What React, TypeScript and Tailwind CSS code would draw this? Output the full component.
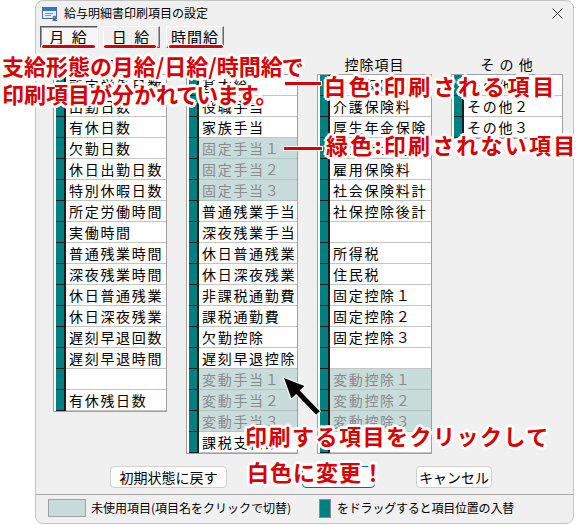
import React from "react";

type Item = { t: string; u?: boolean };

const col1: Item[] = [
  { t: "所定労働日数" }, { t: "出勤日数" }, { t: "有休日数" }, { t: "欠勤日数" },
  { t: "休日出勤日数" }, { t: "特別休暇日数" }, { t: "所定労働時間" }, { t: "実働時間" },
  { t: "普通残業時間" }, { t: "深夜残業時間" }, { t: "休日普通残業" }, { t: "休日深夜残業" },
  { t: "遅刻早退回数" }, { t: "遅刻早退時間" }, { t: "" }, { t: "有休残日数" },
];
const col2: Item[] = [
  { t: "基本給" }, { t: "役職手当" }, { t: "家族手当" },
  { t: "固定手当１", u: true }, { t: "固定手当２", u: true }, { t: "固定手当３", u: true },
  { t: "普通残業手当" }, { t: "深夜残業手当" }, { t: "休日普通残業" }, { t: "休日深夜残業" },
  { t: "非課税通勤費" }, { t: "課税通勤費" }, { t: "欠勤控除" }, { t: "遅刻早退控除" },
  { t: "変動手当１", u: true }, { t: "変動手当２", u: true }, { t: "変動手当３", u: true },
  { t: "課税支給額" },
];
const col3: Item[] = [
  { t: "健康保険料" }, { t: "介護保険料" }, { t: "厚生年金保険" }, { t: "厚生年金基金" },
  { t: "雇用保険料" }, { t: "社会保険料計" }, { t: "社保控除後計" }, { t: "" },
  { t: "所得税" }, { t: "住民税" }, { t: "固定控除１" }, { t: "固定控除２" }, { t: "固定控除３" },
  { t: "" },
  { t: "変動控除１", u: true }, { t: "変動控除２", u: true }, { t: "変動控除３", u: true },
  { t: "" },
];
const col4: Item[] = [{ t: "その他１" }, { t: "その他２" }, { t: "その他３" }];

const OUT =
  "[text-shadow:0_0_3px_#fff,-2px_-2px_0_#fff,2px_-2px_0_#fff,-2px_2px_0_#fff,2px_2px_0_#fff,0_-3px_0_#fff,0_3px_0_#fff,-3px_0_0_#fff,3px_0_0_#fff]";

function Row({ item }: { item: Item }) {
  return (
    <div className="flex h-[21px]">
      <div className="w-[8px] bg-[#008080] border-b border-b-[#1c1c1c]" />
      <div className="w-[2px] bg-[#1c1c1c]" />
      <div
        className={
          item.u
            ? "flex-1 border-b border-b-[#b8c4c4] bg-[#c9dcdc] text-[#8a8a8a] pl-[3px] text-[14px] leading-[20px] tracking-[1.7px] whitespace-nowrap overflow-hidden"
            : "flex-1 border-b border-b-[#c4c4c4] bg-white text-black pl-[3px] text-[14px] leading-[20px] tracking-[1.7px] whitespace-nowrap overflow-hidden"
        }
      >
        {item.t}
      </div>
    </div>
  );
}

function Column({ title, items, cls }: { title: string; items: Item[]; cls: string }) {
  return (
    <div className={cls}>
      <div className="h-[17px] text-center text-[14px] leading-[17px] tracking-[1px] text-black whitespace-nowrap">
        {title}
      </div>
      <div className="mt-[1px] border border-[#a0a0a0] bg-white pl-[2px]">
        {items.map((it, i) => (
          <Row key={i} item={it} />
        ))}
      </div>
    </div>
  );
}

export default function App() {
  return (
    <div className="relative w-[581px] h-[525px] bg-white overflow-hidden font-['Noto_Sans_CJK_JP',sans-serif]">
      {/* Window */}
      <div className="ml-[35px] w-[539px] h-[524px] border border-[#c4c4c4] rounded-[8px] bg-[#f0f0f0] flex flex-col">
        {/* Title bar */}
        <div className="h-[24px] flex items-center pl-[6px]">
          <svg width="16" height="15" viewBox="0 0 16 15">
            <rect x="0.5" y="1.5" width="14" height="11" fill="#e4eef6" stroke="#4a6f96" />
            <rect x="1" y="2" width="13" height="3" fill="#2f78c4" />
            <rect x="3" y="7" width="8" height="1" fill="#7d93aa" />
            <rect x="3" y="9" width="6" height="1" fill="#7d93aa" />
            <text x="10.5" y="14.5" fontSize="8" fontWeight="bold" fill="#f2d200" stroke="#1c4fa0" strokeWidth="0.6" fontFamily="Liberation Sans, sans-serif">2</text>
          </svg>
          <span className="ml-[6px] text-[12px] leading-[14px] text-black">給与明細書印刷項目の設定</span>
          <svg className="ml-auto mr-[10px]" width="11" height="11" viewBox="0 0 11 11">
            <path d="M0.5 0.5 L10.5 10.5 M10.5 0.5 L0.5 10.5" stroke="#333" strokeWidth="1" />
          </svg>
        </div>

        {/* Tabs */}
        <div className="mt-[1px] h-[22px] flex pl-[4px]">
          <div className="w-[58px] h-[22px] border border-t-[#5a5a5a] border-l-[#5a5a5a] border-b-white border-r-white bg-[#f7f7f7] shadow-[inset_1px_1px_0_#a0a0a0] flex items-center justify-center text-[15px] tracking-[2px] text-black">
            月 給
          </div>
          <div className="ml-[5px] w-[57px] h-[22px] border border-t-white border-l-white border-b-[#696969] border-r-[#696969] bg-[#f0f0f0] shadow-[inset_-1px_-1px_0_#a8a8a8] flex items-center justify-center text-[15px] tracking-[2px] text-black">
            日 給
          </div>
          <div className="ml-[6px] w-[58px] h-[22px] border border-t-white border-l-white border-b-[#696969] border-r-[#696969] bg-[#f0f0f0] shadow-[inset_-1px_-1px_0_#a8a8a8] flex items-center justify-center text-[15px] tracking-[1px] text-black">
            時間給
          </div>
        </div>

        {/* Columns */}
        <div className="mt-[8px] flex items-start">
          <Column cls="ml-[17px] w-[114px]" title="勤怠項目" items={col1} />
          <Column cls="ml-[19px] w-[112px]" title="支給項目" items={col2} />
          <Column cls="ml-[19px] w-[115px]" title="控除項目" items={col3} />
          <Column cls="ml-[19px] w-[112px]" title="そ の 他" items={col4} />
        </div>

        {/* Buttons */}
        <div className="mt-[12px] h-[22px] flex">
          <div className="ml-[74px] w-[117px] h-[22px] rounded-[4px] border border-[#d0d0d0] bg-[#fdfdfd] flex items-center justify-center text-[14px] text-black">
            初期状態に戻す
          </div>
          <div className="ml-[75px] w-[73px] h-[22px] rounded-[4px] border border-[#0067c0] bg-[#fdfdfd] flex items-center justify-center text-[14px] text-black">
            印　刷
          </div>
          <div className="ml-[41px] w-[76px] h-[22px] rounded-[4px] border border-[#d0d0d0] bg-[#fdfdfd] flex items-center justify-center text-[14px] text-black">
            キャンセル
          </div>
        </div>

        {/* Status bar */}
        <div className="mt-[6px] border-t border-t-[#a8a8a8] flex-1 flex items-center pl-[12px] pb-[2px]">
          <div className="w-[271px] flex items-center">
            <div className="w-[38px] h-[18px] bg-[#c9dcdc] border border-[#a0a0a0]" />
            <span className="ml-[5px] text-[12px] text-black whitespace-nowrap">未使用項目(項目名をクリックで切替)</span>
          </div>
          <div className="flex items-center">
            <div className="w-[12px] h-[19px] bg-[#008080] border border-[#8a8a8a]" />
            <span className="ml-[6px] text-[12px] tracking-[-0.2px] text-black whitespace-nowrap">をドラッグすると項目位置の入替</span>
          </div>
        </div>
      </div>

      {/* Annotations */}
      <div className="absolute left-[42px] top-[45px] w-[53px] h-[3px] rounded-full bg-[#d80000] shadow-[0_0_0_1px_#fff]" />
      <div className="absolute left-[104px] top-[45px] w-[52px] h-[3px] rounded-full bg-[#d80000] shadow-[0_0_0_1px_#fff]" />
      <div className="absolute left-[169px] top-[45px] w-[54px] h-[3px] rounded-full bg-[#d80000] shadow-[0_0_0_1px_#fff]" />

      <div className={"absolute left-[2px] top-[53px] text-[22px] leading-[24px] font-bold text-[#d80000] whitespace-nowrap [font-feature-settings:'palt'] " + OUT}>
        支給形態の月給/日給/時間給で
      </div>
      <div className={"absolute left-[2px] top-[81px] text-[22px] leading-[24px] font-bold text-[#d80000] whitespace-nowrap [font-feature-settings:'palt'] " + OUT}>
        印刷項目が分かれています。
      </div>

      <div className="absolute left-[285px] top-[82px] w-[36px] h-[3px] bg-[#d80000] shadow-[0_0_0_1px_#fff]" />
      <div className={"absolute left-[324px] top-[73px] text-[22px] leading-[24px] font-bold tracking-[2.8px] text-[#d80000] whitespace-nowrap " + OUT}>
        白色:印刷される項目
      </div>

      <div className="absolute left-[284px] top-[147px] w-[38px] h-[3px] bg-[#d80000] shadow-[0_0_0_1px_#fff]" />
      <div className={"absolute left-[326px] top-[132px] text-[22px] leading-[24px] font-bold tracking-[2.2px] text-[#d80000] whitespace-nowrap " + OUT}>
        緑色:印刷されない項目
      </div>

      <svg className="absolute left-[275px] top-[370px]" width="50" height="50" viewBox="0 0 50 50">
        <polygon
          points="9,8 29.4,16 24.7,20.6 44.8,41.3 41.2,44.7 21.1,24 16.4,28.6"
          fill="#000"
          stroke="#fff"
          strokeWidth="2"
          strokeLinejoin="round"
          paintOrder="stroke"
        />
      </svg>

      <div className={"absolute left-[245px] top-[423px] text-[22px] leading-[24px] font-bold tracking-[1.5px] text-[#d80000] whitespace-nowrap " + OUT}>
        印刷する項目をクリックして
      </div>
      <div className={"absolute left-[247px] top-[459px] text-[22px] leading-[24px] font-bold tracking-[1px] text-[#d80000] whitespace-nowrap " + OUT}>
        白色に変更！
      </div>
    </div>
  );
}
